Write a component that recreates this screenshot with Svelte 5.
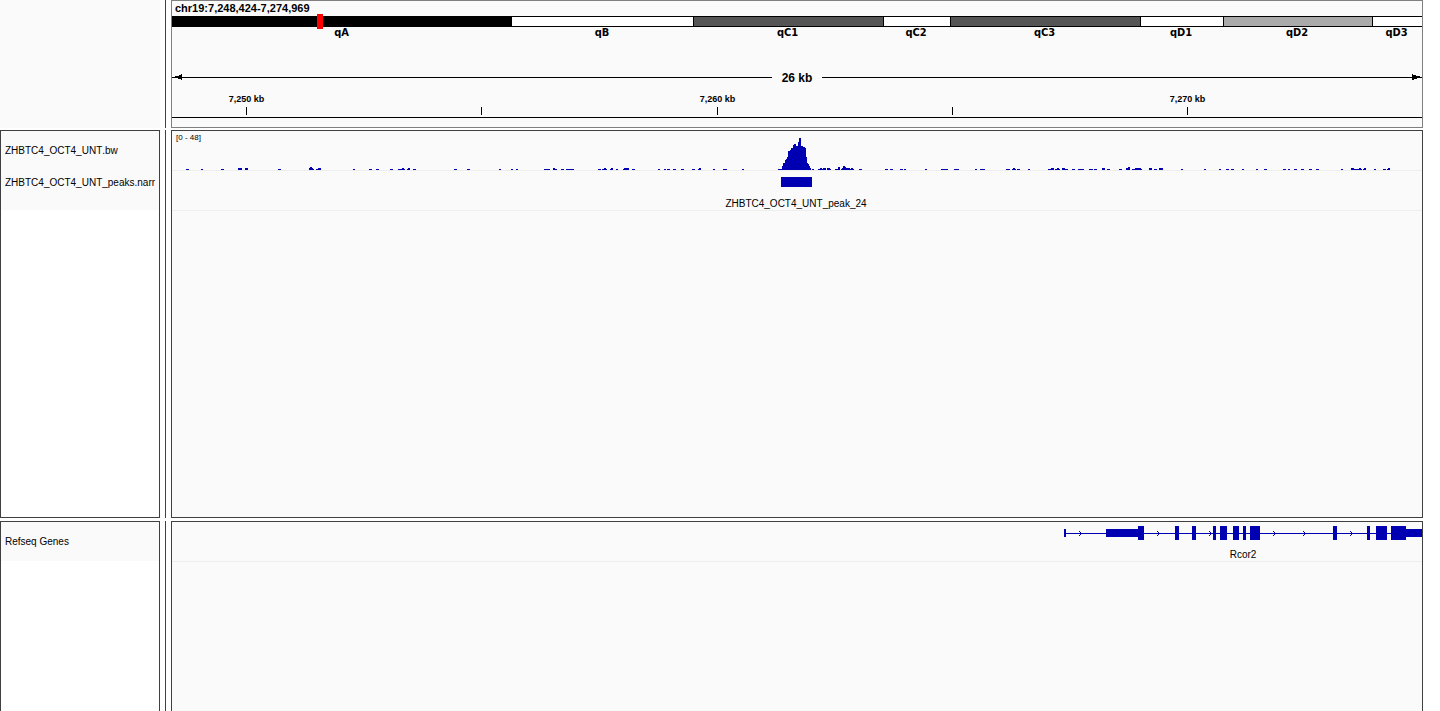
<script>
  const VIEW = 1250;
  const pct = (x) => `${(x / VIEW) * 100}%`;

  const bands = [
    { name: 'qA', size: 340, tone: 'black' },
    { name: 'qB', size: 181, tone: 'white' },
    { name: 'qC1', size: 190, tone: 'dark' },
    { name: 'qC2', size: 67, tone: 'white' },
    { name: 'qC3', size: 190, tone: 'dark' },
    { name: 'qD1', size: 83, tone: 'white' },
    { name: 'qD2', size: 149, tone: 'light' },
    { name: 'qD3', size: 50, tone: 'white' }
  ];

  const ticks = [
    { x: 74, label: '7,250 kb' },
    { x: 309, label: '' },
    { x: 545, label: '7,260 kb' },
    { x: 780, label: '' },
    { x: 1015, label: '7,270 kb' }
  ];

  // Coverage bins: [start, width, height]
  const coverage = [
    [14, 3, 1], [29, 2, 1], [49, 3, 1], [66, 4, 2], [73, 3, 2], [106, 3, 1],
    [137, 5, 1], [137, 4, 2], [138, 2, 3], [144, 5, 1], [146, 3, 2], [181, 2, 1],
    [197, 3, 1], [204, 3, 1], [218, 3, 1], [226, 7, 1], [230, 2, 2], [235, 3, 1],
    [236, 2, 2], [241, 3, 1], [282, 3, 1], [295, 3, 1], [327, 2, 1], [339, 2, 1],
    [344, 2, 1], [372, 6, 1], [381, 4, 1], [381, 2, 2], [389, 3, 1], [394, 8, 1],
    [426, 3, 1], [430, 5, 1], [432, 2, 2], [438, 3, 1], [439, 2, 2], [444, 2, 1],
    [451, 6, 1], [452, 5, 2], [460, 3, 1], [486, 2, 1], [492, 2, 1], [495, 3, 1],
    [501, 3, 1], [509, 3, 1], [520, 3, 1], [526, 3, 1], [527, 2, 2], [541, 2, 1],
    [551, 4, 1], [570, 2, 1], [606, 4, 1], [640, 2, 1], [646, 8, 1], [648, 2, 2],
    [651, 3, 2], [655, 4, 1], [655, 3, 2], [663, 5, 1], [666, 2, 3], [669, 13, 1],
    [670, 1, 2], [671, 2, 4], [673, 1, 3], [674, 4, 2], [679, 2, 2], [687, 3, 1],
    [713, 3, 1], [718, 3, 1], [728, 3, 1], [732, 2, 1], [753, 2, 1], [769, 7, 1],
    [782, 5, 1], [803, 2, 1], [808, 5, 1], [834, 4, 1], [840, 4, 1], [841, 2, 2],
    [845, 3, 1], [856, 2, 1], [876, 6, 1], [879, 3, 2], [883, 5, 1], [885, 2, 2],
    [890, 6, 1], [890, 3, 2], [900, 3, 1], [906, 6, 1], [917, 4, 1], [922, 3, 1],
    [930, 3, 2], [935, 3, 1], [947, 3, 1], [954, 4, 2], [956, 2, 3], [960, 10, 1],
    [963, 6, 2], [977, 3, 2], [982, 3, 1], [987, 4, 2], [1009, 2, 1], [1032, 2, 1],
    [1047, 2, 1], [1054, 3, 1], [1059, 3, 1], [1070, 2, 1], [1084, 2, 1], [1092, 3, 1],
    [1111, 3, 1], [1116, 2, 1], [1122, 3, 1], [1129, 3, 1], [1137, 3, 1], [1144, 3, 1],
    [1169, 2, 1], [1179, 11, 1], [1179, 3, 2], [1187, 2, 2], [1191, 3, 1], [1192, 2, 2],
    [1202, 2, 1], [1211, 3, 1], [1215, 3, 1], [1216, 2, 2]
  ];

  const summit = [
    4, 7, 7, 10, 11, 13, 19, 19, 20, 22, 22, 25, 26, 26, 24, 24, 28, 32, 32, 24,
    24, 23, 23, 22, 13, 7, 6, 4, 2
  ].map((h, i) => [610 + i, 1, h]);

  const bins = [...coverage, ...summit];

  const utrs = [[892, 2], [934, 32], [1234, 16]];
  const exons = [
    [966, 6], [1003, 4], [1020, 4], [1041, 3], [1048, 7], [1061, 6],
    [1071, 3], [1078, 10], [1161, 4], [1195, 3], [1204, 11], [1219, 15]
  ];
  const strand = [907, 985, 1037, 1101, 1131, 1178];
</script>

<main class="browser">
  <section class="row header">
    <div class="corner"></div>
    <div class="divider"></div>
    <div class="panel ruler">
      <div class="locus">chr19:7,248,424-7,274,969</div>
      <div class="ideogram">
        {#each bands as band}
          <div class="band" style:flex-grow={band.size}>
            <div class="stain {band.tone}"></div>
            <span>{band.name}</span>
          </div>
        {/each}
        <div class="window-mark" style:left={pct(145)}></div>
      </div>
      <div class="span">
        <svg class="head" viewBox="0 0 10 6" aria-hidden="true"><path d="M9 0H10V6H9V5H6V4H0V3H3V2H7V1H9Z" /></svg>
        <i></i>
        <b>26 kb</b>
        <i></i>
        <svg class="head" viewBox="0 0 10 6" aria-hidden="true"><path d="M0 0H1V1H4V2H8V3H10V4H5V5H2V6H0Z" /></svg>
      </div>
      <div class="axis">
        {#each ticks as tick}
          <div class="tick" style:left={pct(tick.x)}><span>{tick.label}</span></div>
        {/each}
      </div>
    </div>
  </section>

  <section class="row tracks">
    <div class="panel names">
      <div class="name">ZHBTC4_OCT4_UNT.bw</div>
      <div class="name upper">ZHBTC4_OCT4_UNT_peaks.narr</div>
    </div>
    <div class="divider"></div>
    <div class="panel data">
      <div class="track">
        <span class="range">[0 - 48]</span>
        <svg viewBox="0 0 1250 39" preserveAspectRatio="none" aria-hidden="true">
          {#each bins as [x, w, h]}
            <rect {x} y={39 - h} width={w} height={h} />
          {/each}
        </svg>
      </div>
      <div class="track">
        <svg viewBox="0 0 1250 39" preserveAspectRatio="none" aria-hidden="true">
          <rect x="609" y="6" width="31" height="10" />
        </svg>
        <span class="feature" style:left={pct(624)}>ZHBTC4_OCT4_UNT_peak_24</span>
      </div>
    </div>
  </section>

  <section class="row genes">
    <div class="panel names">
      <div class="name">Refseq Genes</div>
    </div>
    <div class="divider"></div>
    <div class="panel data">
      <div class="track">
        <svg viewBox="0 0 1250 39" preserveAspectRatio="none" aria-hidden="true">
          <rect x="892" y="11" width="358" height="1" />
          {#each utrs as [x, w]}
            <rect {x} y="7" width={w} height="8" />
          {/each}
          {#each exons as [x, w]}
            <rect {x} y="4" width={w} height="14" />
          {/each}
          {#each strand as x}
            <path class="chevron" d="M{x} 9l2.5 2.5l-2.5 2.5" />
          {/each}
        </svg>
        <span class="feature" style:left={pct(1071)}>Rcor2</span>
      </div>
    </div>
  </section>
</main>

<style>
  :global(body) {
    margin: 0;
    background: #fff;
  }

  .browser {
    box-sizing: border-box;
    display: flex;
    flex-direction: column;
    height: 100vh;
    overflow: hidden;
    padding-right: 17px;
    color: #000;
    font: 10px/12px 'Liberation Sans', Arial, sans-serif;
    font-kerning: none;
    white-space: nowrap;
  }

  .row {
    display: grid;
    grid-template-columns: 160px 1px minmax(0, 1fr);
    column-gap: 5px;
    min-height: 0;
  }

  .header {
    margin-bottom: 2px;
  }

  .tracks {
    flex: 388 1 0;
    margin-bottom: 3px;
  }

  .genes {
    flex: 190 1 0;
  }

  .corner {
    background: #fafafa;
  }

  .divider {
    background: #404040;
  }

  .panel {
    box-sizing: border-box;
    border: 1px solid #404040;
    background: #fafafa;
    overflow: hidden;
  }

  .genes .panel {
    border-bottom: 0;
  }

  .names {
    background: #fff;
  }

  .name {
    box-sizing: border-box;
    height: 39px;
    padding: 14px 0 0 4px;
    background: #fafafa;
    overflow: hidden;
  }

  .name.upper {
    height: 40px;
    padding-top: 7px;
  }

  .ruler {
    border-color: #808080;
  }

  .locus {
    box-sizing: border-box;
    height: 15px;
    padding-left: 3px;
    font-size: 11px;
    font-weight: bold;
    line-height: 14px;
  }

  .ideogram {
    position: relative;
    display: flex;
  }

  .band {
    flex: 1 1 0;
    min-width: 0;
    text-align: center;
    font: bold 11px/12px 'DejaVu Sans Condensed', 'DejaVu Sans', sans-serif;
  }

  .band span {
    display: block;
    padding-right: 1px;
  }

  .stain {
    box-sizing: border-box;
    height: 11px;
    border: solid #000;
    border-width: 1px 0 1px 1px;
  }

  .black { background: #000; }
  .white { background: #fff; }
  .dark { background: #555; }
  .light { background: #aaa; }

  .band:nth-child(2) .stain {
    border-left: 0;
  }

  .window-mark {
    position: absolute;
    top: -2px;
    width: 6px;
    height: 15px;
    background: #f00;
  }

  .span {
    display: flex;
    align-items: flex-start;
    height: 14px;
    margin-top: 31px;
  }

  .span i {
    flex: 1;
    height: 1px;
    margin-top: 7px;
    background: #000;
  }

  .span b {
    width: 50px;
    text-align: center;
    font-size: 12px;
    line-height: 16px;
  }

  .head {
    flex: none;
    width: 10px;
    height: 6px;
    margin-top: 4px;
    shape-rendering: crispEdges;
  }

  .axis {
    position: relative;
    height: 33px;
    border-bottom: 1px solid #000;
    margin-bottom: 9px;
  }

  .tick {
    position: absolute;
    bottom: 2px;
    width: 1px;
    height: 8px;
    background: #000;
    display: flex;
    justify-content: center;
  }

  .tick span {
    margin-top: -14px;
    font-size: 9px;
    font-weight: bold;
  }

  .track {
    position: relative;
    height: 39px;
    border-bottom: 1px solid #eee;
  }

  .track svg {
    display: block;
    width: 100%;
    height: 39px;
    fill: #0000b2;
    shape-rendering: crispEdges;
  }

  .track .chevron {
    fill: none;
    stroke: #0000b2;
    shape-rendering: auto;
  }

  .range {
    position: absolute;
    top: 1px;
    left: 4px;
    font-size: 8px;
  }

  .feature {
    position: absolute;
    top: 27px;
    transform: translateX(-50%);
  }
</style>
